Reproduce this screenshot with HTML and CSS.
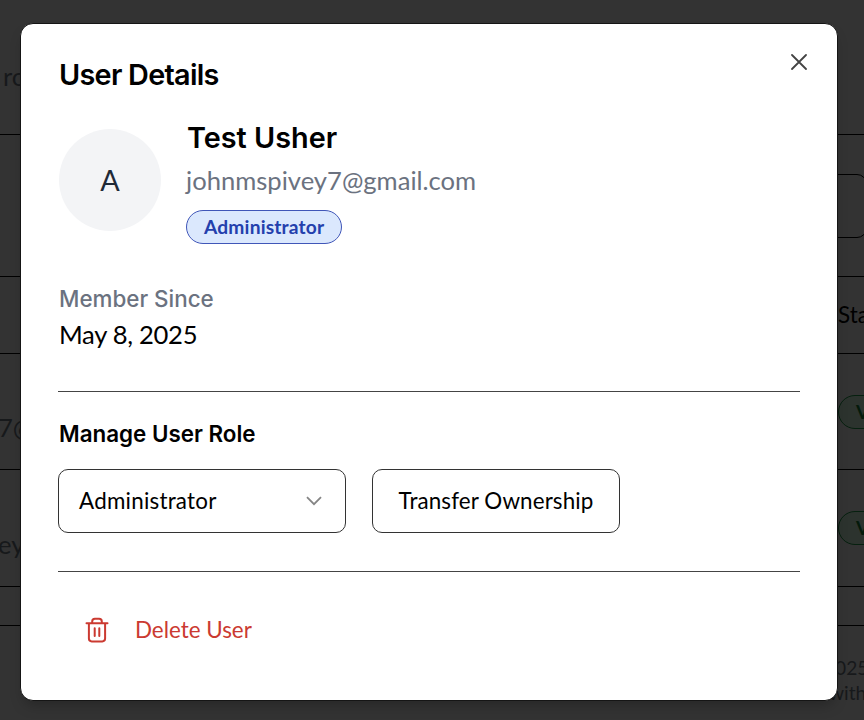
FILE: index.html
```html
<!DOCTYPE html>
<html lang="en">
<head>
<meta charset="utf-8">
<title>User Details</title>
<link rel="stylesheet" href="styles.css">
</head>
<body>
<div class="page">
  <div class="band intro"><span class="muted">ro</span></div>
  <div class="band search"><div class="field"></div></div>
  <div class="band heading"><span class="column">Sta</span></div>
  <div class="band row"><span class="muted">7@</span><span class="status">V</span></div>
  <div class="band row second"><span class="muted">ey</span><span class="status">V</span></div>
  <div class="band spacer"></div>
  <div class="footer"><span>025</span><span class="second-line">with</span></div>
</div>
<div class="overlay">
  <main class="dialog">
    <header class="top">
      <h1 class="title">User Details</h1>
      <svg class="close" viewBox="0 0 16 16"><path d="M1 1 15 15M15 1 1 15"/></svg>
    </header>
    <section class="profile">
      <div class="avatar">A</div>
      <div class="identity">
        <h2 class="name">Test Usher</h2>
        <div class="email">johnmspivey7@gmail.com</div>
        <span class="badge">Administrator</span>
      </div>
    </section>
    <section class="member">
      <h3 class="label">Member Since</h3>
      <p class="date">May 8, 2025</p>
    </section>
    <section class="manage">
      <h3 class="subtitle">Manage User Role</h3>
      <div class="controls">
        <div class="select"><span class="t-select">Administrator</span><svg class="chevron" viewBox="0 0 16 10"><path d="M1 1.2 8 8.2 15 1.2"/></svg></div>
        <div class="button"><span class="t-button">Transfer Ownership</span></div>
      </div>
    </section>
    <section class="danger">
      <svg class="trash" viewBox="0 0 24 26"><path d="M1.5 6.2H22.5M3.9 6.2V21.6Q3.9 24.4 6.7 24.4H17.3Q20.1 24.4 20.1 21.6V6.2M7.2 6.2V4.5Q7.2 1.8 9.9 1.8H14.1Q16.8 1.8 16.8 4.5V6.2M9.7 11.2V19M14.3 11.2V19"/></svg>
      <span class="delete">Delete User</span>
    </section>
  </main>
</div>
</body>
</html>
```

FILE: styles.css
```css
* { box-sizing: border-box; }
body { margin: 0; width: 864px; height: 720px; overflow: hidden; background: #333; font-family: Lato, sans-serif; position: relative; }
h1, h2, h3, p { margin: 0; }
.page { width: 864px; height: 720px; overflow: hidden; display: flex; flex-direction: column; color: #000; }
.band { display: flex; align-items: center; justify-content: space-between; border-bottom: 1px solid #000; flex: none; }
.muted { color: #17191b; font-size: 25.6px; line-height: 38px; }
.intro { height: 135px; padding: 17px 0 0 3px; }
.search { height: 142px; justify-content: flex-end; }
.field { width: 70px; height: 64px; border: 1px solid #000; border-radius: 10px; margin-right: -3px; }
.heading { height: 77px; justify-content: flex-end; }
.column { width: 26px; font-size: 22.4px; line-height: 34px; margin-top: -1px; }
.row { height: 116px; }
.row .muted { margin: 31px 0 0 -2px; }
.second { height: 117px; }
.status { width: 60px; height: 34px; margin-right: -34px; padding-left: 17px; border: 1px solid #06200f; border-radius: 17px; background: #2c332e; color: #041a0b; font-size: 19.2px; line-height: 32px; font-weight: 700; }
.spacer { height: 39px; }
.footer { display: flex; flex-direction: column; align-items: flex-start; padding: 29px 0 0 835px; font-size: 19.2px; line-height: 25px; color: #17191b; }
.second-line { margin-left: -6px; }
.overlay { position: absolute; inset: 0; padding: 23px 26px 19px 20px; }
.dialog { height: 678px; width: 818px; border: 1px solid #151515; border-radius: 13px; background: #fff; padding: 36px 37px 0; box-shadow: 0 8px 14px -4px rgba(0,0,0,.25); display: flex; flex-direction: column; }
.top { display: flex; justify-content: space-between; height: 69px; }
.title { font: 600 28.8px/29px Inter, sans-serif; letter-spacing: -.72px; margin-left: 1px; }
.close { width: 16px; height: 16px; margin: -6px -7px 0 0; fill: none; stroke: #444; stroke-width: 1.8; stroke-linecap: round; }
.profile { display: flex; gap: 25px; height: 154px; }
.avatar { width: 102px; height: 102px; border-radius: 50%; background: #f3f4f6; color: #1f2937; display: flex; align-items: center; justify-content: center; font-size: 28.8px; margin-left: 1px; }
.identity { display: flex; flex-direction: column; align-items: flex-start; margin-top: -11px; }
.name { font: 600 28.8px/40px Inter, sans-serif; margin-left: 1px; }
.email { color: #6b7280; font-size: 25.6px; line-height: 38px; margin-top: 3px; }
.badge { height: 34px; margin-top: 11px; padding: 0 17px; border: 1px solid #4056b8; border-radius: 17px; background: #dbe8fd; color: #2440ad; font-size: 19.2px; line-height: 32px; font-weight: 700; letter-spacing: .17px; }
.member { height: 108px; padding-left: 1px; }
.label { color: #6b7280; font: 500 22.4px/32px Inter, sans-serif; }
.date { font-size: 25.6px; line-height: 38px; letter-spacing: -.3px; }
.manage { box-sizing: content-box; height: 152px; border-top: 1px solid #444; border-bottom: 1px solid #444; padding-top: 27px; flex: none; }
.manage { height: 152px; }
.subtitle { font: 600 22.4px/30px Inter, sans-serif; padding-left: 1px; }
.controls { display: flex; gap: 26px; margin-top: 20px; }
.select, .button { height: 64px; border: 1px solid #333; border-radius: 10px; display: flex; align-items: center; font-size: 22.4px; padding-bottom: 1px; }
.select { width: 288px; justify-content: space-between; padding: 0 23px 1px 20px; }
.t-select { letter-spacing: .23px; }
.button { width: 248px; justify-content: center; }
.t-button { letter-spacing: .12px; }
.chevron { width: 16px; height: 10px; fill: none; stroke: #858585; stroke-width: 1.8; }
.danger { display: flex; align-items: center; gap: 26px; padding: 41px 0 0 27px; color: #cb3a31; font-size: 22.4px; line-height: 34px; }
.trash { width: 24px; height: 26px; fill: none; stroke: currentColor; stroke-width: 2; stroke-linecap: round; }
```
